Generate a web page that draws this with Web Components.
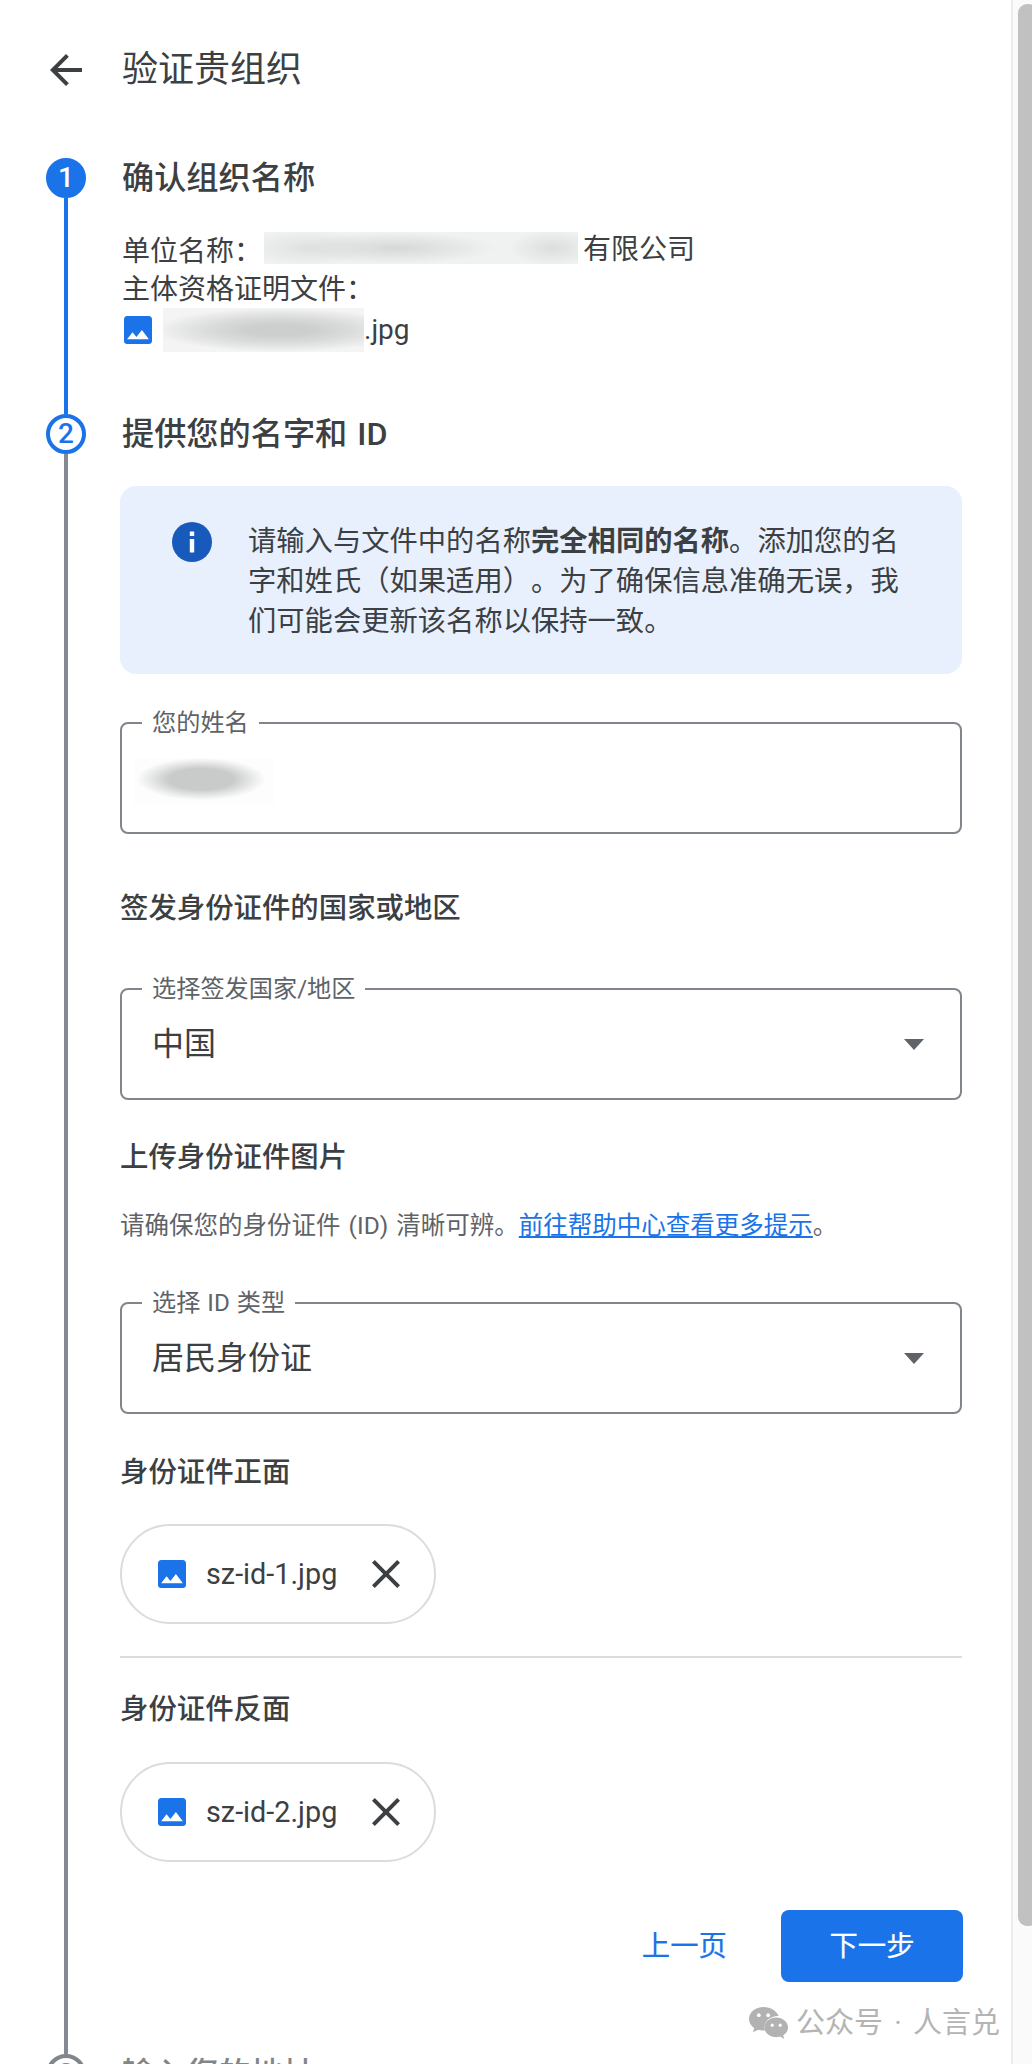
<!DOCTYPE html>
<html lang="zh-CN">
<head>
<meta charset="utf-8">
<title>验证贵组织</title>
<style>
html,body{margin:0;padding:0;background:#fff}
body{width:1032px;height:2064px;overflow:hidden;font-family:Roboto,"Noto Sans CJK SC",sans-serif;color:#3c4043;font-size:28px;line-height:40px;text-spacing-trim:space-all}
</style>
</head>
<body>
<template id="t-app"><style>
:host{display:flex;position:relative;width:1032px;height:2064px;overflow:hidden;background:#fff}
.main{flex:1;min-width:0}
</style><div class="main"><slot></slot></div><slot name="scrollbar"></slot><slot name="overlay"></slot></template>

<template id="t-header"><style>
:host{display:flex;align-items:center;height:140px;padding-left:42px;gap:32px;margin-bottom:18px;font-size:36px;color:#3c4043}
svg{width:48px;height:48px;fill:#3c4043;display:block}
</style><svg viewBox="0 0 24 24"><path d="M20 11H7.83l5.59-5.59L12 4l-8 8 8 8 1.41-1.41L7.83 13H20v-2z"/></svg><slot></slot></template>

<template id="t-stepper"><style>
:host{display:block;padding:0 49px 0 46px}
</style><slot></slot></template>

<template id="t-step"><style>
:host{display:grid;grid-template-columns:40px 1fr;column-gap:36px;--c:#80868b;--line:#868991}
:host([state=done]){--c:#1a73e8;--line:#1a73e8}
:host([state=active]){--c:#1a73e8}
.rail{display:flex;flex-direction:column;align-items:center}
.dot{box-sizing:border-box;width:40px;height:40px;border-radius:50%;border:4px solid var(--c);color:var(--c);display:flex;align-items:center;justify-content:center;font:500 28px/1 Roboto,sans-serif;flex:none}
:host([state=done]) .dot{background:#1a73e8;color:#fff}
.line{flex:1;width:4px;background:var(--line)}
.head{font-size:32.2px;font-weight:500;line-height:40px;word-spacing:2px;color:#3c4043}
:host([state=pending]) .head{color:#80868b}
.body{min-width:0}
</style><div class="rail"><div class="dot"></div><div class="line"></div></div><div class="body"><div class="head"></div><slot></slot></div></template>

<template id="t-notice"><style>
:host{display:flex;gap:36px;box-sizing:border-box;height:188px;padding:36px 52px 0;margin:32px 0 0 -2px;background:#e8f0fe;border-radius:16px;font-size:28.3px;line-height:40px;color:#3c4043}
svg{flex:none;width:40px;height:40px;display:block}
.text{flex:1;min-width:0}
</style><svg viewBox="0 0 40 40"><circle cx="20" cy="20" r="20" fill="#185abc"/><rect x="17.8" y="9.5" width="4.4" height="4.6" rx=".4" fill="#fff"/><rect x="17.8" y="17" width="4.4" height="13.5" rx=".4" fill="#fff"/></svg><div class="text"><slot></slot></div></template>

<template id="t-field"><style>
:host{display:flex;align-items:center;position:relative;box-sizing:border-box;height:112px;border:2px solid #80868b;border-radius:8px;padding:0 36px 0 30px;margin-left:-2px;font-size:32px;line-height:44px;color:#3c4043}
:host([bare]){padding-left:12px}
.label{position:absolute;left:20px;top:-15px;padding:0 10px;background:#fff;font-size:24.2px;line-height:28px;word-spacing:1px;color:#5f6368;white-space:nowrap}
.val{flex:1;min-width:0;display:flex;align-items:center}
svg{flex:none;width:20px;height:11px;fill:#5f6368;display:none}
:host([select]) svg{display:block}
</style><div class="label"></div><div class="val"><slot></slot></div><svg viewBox="0 0 20 11"><path d="M0 0h20L10 11z"/></svg></template>

<template id="t-redact"><style>
:host{display:block;flex:none;width:var(--w);height:var(--h);background:var(--bg)}
</style></template>

<template id="t-icon"><style>
:host{display:block;flex:none;width:28px;height:28px}
svg{display:block;width:28px;height:28px;fill:#1a73e8}
</style><svg viewBox="3 3 18 18"><path d="M21 19V5c0-1.1-.9-2-2-2H5c-1.1 0-2 .9-2 2v14c0 1.1.9 2 2 2h14c1.1 0 2-.9 2-2zM8.5 13.5l2.5 3.01L14.5 12l4.5 6H5l3.5-4.5z"/></svg></template>

<template id="t-chip"><style>
:host{display:flex;align-items:center;box-sizing:border-box;width:316px;height:100px;border:2px solid #dadce0;border-radius:50px;padding:0 34px 0 36px;margin-left:-2px;font-size:28.8px;line-height:40px;color:#3c4043}
.name{margin-left:20px;flex:1}
svg{flex:none;display:block;width:28px;height:28px;fill:#3c4043}
</style><v-img-icon></v-img-icon><span class="name"><slot></slot></span><svg viewBox="5 5 14 14"><path d="M19 6.41L17.59 5 12 10.59 6.41 5 5 6.41 10.59 12 5 17.59 6.41 19 12 13.41 17.59 19 19 17.59 13.41 12z"/></svg></template>

<template id="t-sub"><style>
:host{display:block;margin-left:-2px;font-size:28.4px;font-weight:500;line-height:40px;color:#3c4043}
</style><slot></slot></template>

<template id="t-actions"><style>
:host{display:flex;justify-content:flex-end;align-items:center;gap:54px;height:72px;margin:48px -1px 0 0}
.prev{color:#1a73e8;font-size:28.4px;padding-top:2px;-webkit-text-stroke:.2px currentColor}
.next{display:flex;align-items:center;justify-content:center;box-sizing:border-box;width:182px;height:72px;padding-top:2px;background:#1a73e8;color:#fff;border-radius:8px;font-size:28.4px;-webkit-text-stroke:.2px currentColor}
</style><span class="prev">上一页</span><span class="next">下一步</span></template>

<template id="t-scrollbar"><style>
:host{display:block;flex:none;box-sizing:border-box;width:21px;height:2064px;background:#fafafa;border-left:2px solid #ececec;padding:4px 0 0 5px;overflow:hidden}
.thumb{width:20px;height:1922px;background:#c1c1c1;border-radius:9px}
</style><div class="thumb"></div></template>

<template id="t-mark"><style>
:host{position:absolute;left:749px;top:2003px;display:flex;align-items:center;gap:8px;height:40px;font-size:29px;line-height:40px;word-spacing:4px;color:#b4b4b4;white-space:nowrap}
svg{display:block;width:39px;height:33px}
</style><svg viewBox="0 0 39 33"><path fill="#b2b2b2" d="M14.5 0C6.500 0 0 5.300 0 11.900c0 3.700 2 6.900 5.200 9.100L4 25.300l5-2.600c1.700.5 3.500.8 5.400.8.500 0 1 0 1.500-.1-.3-1-.5-2-.5-3.100 0-6.200 6-11.200 13.400-11.200h.9C27.600 3.800 21.600 0 14.500 0z"/><path fill="#b2b2b2" d="M39 20.400c0-5.400-5.300-9.800-11.800-9.800s-11.800 4.400-11.800 9.800 5.300 9.800 11.800 9.800c1.400 0 2.700-.2 3.900-.6l4.100 2.400-1-3.700c2.900-1.800 4.800-4.600 4.800-7.900z"/><circle cx="9.800" cy="8.200" r="1.900" fill="#fff"/><circle cx="19.200" cy="8.200" r="1.900" fill="#fff"/><circle cx="23.200" cy="18.200" r="1.600" fill="#fff"/><circle cx="31.200" cy="18.200" r="1.600" fill="#fff"/></svg><slot></slot></template>

<v-app>
  <v-header>验证贵组织</v-header>
  <v-stepper>
    <v-step num="1" state="done" heading="确认组织名称">
      <div style="margin-top:34px;height:36px;display:flex;align-items:center;white-space:nowrap"><span>单位名称<span style="font-family:'Noto Sans CJK TC',sans-serif">：</span></span><v-redact style="--w:314px;--h:32px;margin:-4px 0 0 2px;--bg:radial-gradient(ellipse 32% 50% at 42% 50%,#d6d8d8,transparent),radial-gradient(ellipse 20% 55% at 14% 50%,#dfe0e0,transparent),radial-gradient(ellipse 14% 55% at 92% 50%,#dcdddd,transparent),#f0f1f1"></v-redact><span style="margin-left:5px">有限公司</span></div>
      <div style="margin-top:-1px;height:41px;white-space:nowrap">主体资格证明文件<span style="font-family:'Noto Sans CJK TC',sans-serif">：</span></div>
      <div style="height:44px;padding-bottom:62px;display:flex;align-items:center;white-space:nowrap"><v-img-icon style="margin-left:2px"></v-img-icon><v-redact style="--w:201px;--h:44px;margin-left:11px;--bg:radial-gradient(ellipse 62% 50% at 58% 50%,#cdcfcf 25%,#d9dbdb 55%,rgba(225,226,226,.7) 80%,transparent),#f4f4f4"></v-redact><span>.jpg</span></div>
    </v-step>
    <v-step num="2" state="active" heading="提供您的名字和 ID">
      <v-notice>请输入与文件中的名称<b>完全相同的名称</b>。添加您的名字和姓氏（如果适用）。为了确保信息准确无误，我们可能会更新该名称以保持一致。</v-notice>
      <v-field label="您的姓名" bare style="margin-top:48px"><v-redact style="--w:140px;--h:46px;margin-top:5px;--bg:radial-gradient(ellipse 46% 46% at 48% 46%,#c9cbcb 50%,rgba(210,212,212,.6) 75%,transparent),#fdfdfd"></v-redact></v-field>
      <v-sub style="margin-top:55px">签发身份证件的国家或地区</v-sub>
      <v-field label="选择签发国家/地区" select style="margin-top:59px">中国</v-field>
      <v-sub style="margin-top:38px">上传身份证件图片</v-sub>
      <div style="margin:30px 0 0 -2px;font-size:24.5px;line-height:36px;word-spacing:2px;color:#5f6368;white-space:nowrap">请确保您的身份证件 (ID) 清晰可辨。<a style="color:#1a73e8;text-decoration:underline">前往帮助中心查看更多提示</a>。</div>
      <v-field label="选择 ID 类型" select style="margin-top:58px">居民身份证</v-field>
      <v-sub style="margin-top:39px">身份证件正面</v-sub>
      <v-chip style="margin-top:31px">sz-id-1.jpg</v-chip>
      <div style="height:2px;background:#dadce0;margin:32px 0 0 -2px"></div>
      <v-sub style="margin-top:32px">身份证件反面</v-sub>
      <v-chip style="margin-top:32px">sz-id-2.jpg</v-chip>
      <v-actions style="padding-bottom:72px"></v-actions>
    </v-step>
    <v-step num="3" state="pending" heading="输入您的地址"></v-step>
  </v-stepper>
  <v-scrollbar slot="scrollbar"></v-scrollbar>
  <v-mark slot="overlay">公众号 · 人言兑</v-mark>
</v-app>
<script>
function def(tag,tpl,init){
  customElements.define(tag,class extends HTMLElement{
    constructor(){super();this.attachShadow({mode:'open'}).appendChild(document.getElementById(tpl).content.cloneNode(true));}
    connectedCallback(){if(init)init(this,this.shadowRoot);}
  });
}
def('v-img-icon','t-icon');
def('v-app','t-app');
def('v-header','t-header');
def('v-stepper','t-stepper');
def('v-step','t-step',function(el,s){
  s.querySelector('.dot').textContent=el.getAttribute('num');
  s.querySelector('.head').textContent=el.getAttribute('heading');
});
def('v-notice','t-notice');
def('v-field','t-field',function(el,s){s.querySelector('.label').textContent=el.getAttribute('label');});
def('v-redact','t-redact');
def('v-chip','t-chip');
def('v-sub','t-sub');
def('v-actions','t-actions');
def('v-scrollbar','t-scrollbar');
def('v-mark','t-mark');
</script>
</body>
</html>
